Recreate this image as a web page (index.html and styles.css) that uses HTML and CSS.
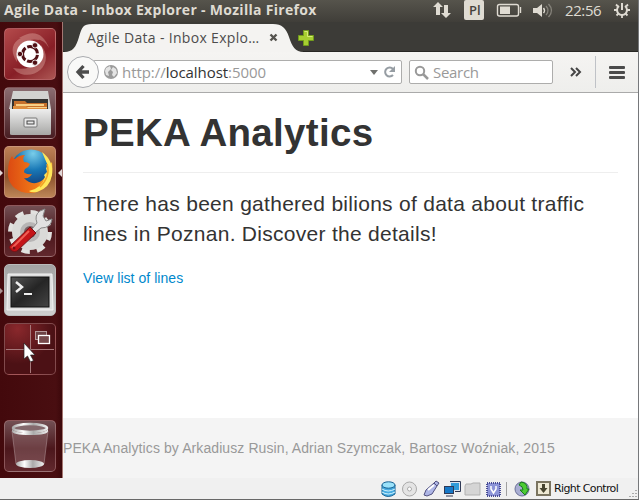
FILE: index.html
```html
<!DOCTYPE html>
<html lang="en">
<head>
<meta charset="utf-8">
<title>Agile Data - Inbox Explorer</title>
<link rel="stylesheet" href="styles.css">
</head>
<body>
<div class="desktop">
  <header class="panel">
    <span class="window-title">Agile Data - Inbox Explorer - Mozilla Firefox</span>
    <svg class="indicators" width="210" height="22" viewBox="0 0 210 22">
      <g fill="#dfdbd2">
        <path d="M9 2l5 5h-3v8H7V7H4zM17 18l-5-5h3V5h4v8h3z"/>
        <rect x="35" y="0" width="20" height="20" rx="2"/>
        <path d="M71 6.500h10v7.500H71zM104 8h4l5-4v13l-5-4h-4z"/>
      </g>
      <g fill="none" stroke="#dfdbd2" stroke-width="1.4">
        <rect x="68.500" y="4.500" width="21" height="11.500" rx="2"/><path d="M91.500 7v6"/>
        <path d="M114.500 8q2 2.500 0 5"/><path d="M117 6q4 4.500 0 9M119.500 4q6 6.500 0 13" stroke="#85827a"/>
      </g>
      <g fill="none" stroke="#dfdbd2" stroke-width="2">
        <path d="M190 6a5 5 0 1 0 6 0M193 3v7"/>
        <path d="M185 10h3M198 10h3M187.500 15.500l2-2M198.500 15.500l-2-2M193 15v3M187 4.500l2 2M199 4.500l-2 2" stroke-width="1.800"/>
      </g>
    </svg>
    <span class="layout-name">Pl</span>
    <span class="clock">22:56</span>
  </header>

  <div class="workspace">
    <nav class="launcher">
      <div class="tile dash"><svg viewBox="0 0 52 52">
        <path d="M13 34C-1 14 22 2 35 12q-8-2-15 3-7 5-7 19M37 17c13 16-2 34-20 29q-5-2-8-6 28 5 28-23M15 10Q36-3 45 20q-4-8-13-9-10-2-17-1" fill="#f5cfc5" opacity=".32"/>
        <circle cx="26" cy="26" r="13.500" fill="#fff"/>
        <circle cx="26" cy="26" r="7.500" fill="none" stroke="#501015" stroke-width="3" stroke-dasharray="13.800 1.908" stroke-dashoffset="-.9"/>
        <g fill="#501015" stroke="#fff" stroke-width=".8"><circle cx="16" cy="26" r="2.700"/><circle cx="31" cy="17.300" r="2.700"/><circle cx="31" cy="34.700" r="2.700"/></g>
      </svg></div>
      <div class="tile files"><svg viewBox="0 0 52 52">
        <defs><linearGradient id="metal" x2="0" y2="1"><stop stop-color="#eee"/><stop offset="1" stop-color="#a7a7a5"/></linearGradient></defs>
        <path d="M9 4h35l3 18H5z" fill="#d2d2d0"/><path d="M8 12h36v12H8z" fill="#343230"/>
        <path d="M10 14h11l2 2h20v7H10z" fill="#c66f2b"/><path d="M12 17h28v2H12zM10 20h33v1H10z" fill="#f8cf86"/>
        <path d="M9 19h13l2 2h19v4H9z" fill="#df8d3d"/><path d="M6 22h41v25q0 1-2 1H8q-2 0-2-1z" fill="url(#metal)"/>
        <rect x="20" y="31" width="13" height="9" rx="1" fill="#e9e9e9" stroke="#777"/><rect x="23" y="34" width="7" height="3" fill="none" stroke="#444"/>
      </svg></div>
      <div class="tile firefox"><i class="arrow running"></i><i class="arrow focused"></i><svg viewBox="0 0 52 52">
        <defs><radialGradient id="globe" cx=".55" cy=".1" r=".8"><stop stop-color="#79cdea"/><stop offset=".5" stop-color="#1978b6"/><stop offset="1" stop-color="#123c7a"/></radialGradient><linearGradient id="fox" x1="0" x2="1"><stop stop-color="#dc4a12"/><stop offset=".65" stop-color="#f17c18"/><stop offset="1" stop-color="#ffc83b"/></linearGradient></defs>
        <circle cx="27" cy="24" r="20.500" fill="url(#globe)"/>
        <path d="M8 10q1 3 3 3 4-4 10-4-3 3-1 7 4 0 6 2-1 3-5 5-2 3 0 4 3 2 7 1-3 5-8 4 5 6 12 5 11-2 12-16l4-5q2 15-6 24-8 8-18 7C11 46 3 37 4 25q0-10 4-15" fill="url(#fox)"/>
        <path d="M38 6q12 9 10 23-2 13-15 17-6 1-8-1 13-3 16-14l-1-2 3-3-1-4 2-2z" fill="#ffe75a"/><path d="M43 18q4 12-7 23" fill="none" stroke="#f0a428" stroke-width="1.500"/>
      </svg></div>
      <div class="tile settings"><svg viewBox="0 0 52 52">
        <circle cx="26" cy="27" r="19" fill="none" stroke="#e1e1df" stroke-width="6" stroke-dasharray="8 6.920"/>
        <circle cx="26" cy="27" r="13.500" fill="none" stroke="#dadad8" stroke-width="9"/><circle cx="26" cy="27" r="10" fill="#b7b5b5"/><circle cx="26" cy="27" r="6" fill="#785f63"/>
        <path d="M28 24l5-6q-3-8 3-12l5-2-2 7 3 5 6-2q-1 9-11 9l-6 5z" fill="#e1e1e1" stroke="#888"/>
        <path d="M26 22l6 6-19 18q-5 2-8-4z" fill="#c41418" stroke="#771116"/><path d="M25 26L8 43" stroke="#ef5d55" stroke-width="2"/><circle cx="10" cy="43" r="1.500" fill="#760e13"/>
      </svg></div>
      <div class="tile terminal"><i class="arrow hollow"></i><svg viewBox="0 0 52 52">
        <defs><linearGradient id="screen" x2="1" y2="1"><stop stop-color="#555"/><stop offset=".5" stop-color="#252525"/><stop offset="1" stop-color="#454545"/></linearGradient></defs>
        <path d="M4 10h44l1 36H3z" fill="#ddd" stroke="#f4f4f4"/><rect x="7" y="13" width="38" height="30" fill="url(#screen)" stroke="#111"/>
        <path d="M12 18l6 5-6 5" fill="none" stroke="#eee" stroke-width="2.500"/><path d="M20 30h8" stroke="#eee" stroke-width="2"/>
      </svg></div>
      <div class="tile workspaces"><svg viewBox="0 0 52 52">
        <path d="M26.500 2v48M2 26.500h48" stroke="#a6787a"/><rect x="31.500" y="8.500" width="11" height="8" fill="#6e4345" stroke="#b59a9b"/><rect x="34.500" y="12.500" width="11" height="8" fill="#76494b" stroke="#fff" stroke-width="1.300"/>
        <path d="M20 20v16l3.500-3 3 6 3-1.500-3-5.500h4.500z" fill="#fff" stroke="#222" stroke-width=".7"/>
      </svg></div>
      <div class="tile trash"><svg viewBox="0 0 52 52">
        <defs><linearGradient id="rim"><stop stop-color="#aaa"/><stop offset=".3" stop-color="#fff"/><stop offset=".6" stop-color="#aaa"/><stop offset="1" stop-color="#eee"/></linearGradient></defs>
        <path d="M8 11h36l-4 33q-14 5-28 0z" fill="#b99b9f" fill-opacity=".3" stroke="#a98b8e" stroke-opacity=".6"/>
        <ellipse cx="26" cy="44" rx="14" ry="4" fill="url(#rim)"/><ellipse cx="26" cy="8" rx="17" ry="4" fill="#84696d" stroke="url(#rim)" stroke-width="2.500"/><path d="M8 8q0 5 18 5t18-5v3q0 4-18 4T8 11z" fill="url(#rim)"/>
      </svg></div>
    </nav>

    <main class="browser">
      <div class="tab-strip">
        <svg class="tab-shape" width="258" height="30" viewBox="0 0 258 30"><path d="M0 30c9 0 12-5 15-15S19 2 28 2h181c9 0 13 4 16 13s6 15 15 15z" fill="#f4f3f1"/><path d="M239.500 8.500h5v5h5v5h-5v5h-5v-5h-5v-5h5z" fill="#a7cf31" stroke="#729c1c"/><path d="M240.500 9.500h3v5h5" stroke="#d7ec79" fill="none"/></svg>
        <span class="tab-title">Agile Data - Inbox Explo…</span>
        <svg class="tab-close" width="9" height="9" viewBox="0 0 9 9"><path d="M1.500 1.500l6 6m0-6l-6 6" stroke="#55534f" stroke-width="2.400"/></svg>
      </div>
      <div class="toolbar">
        <div class="back"><svg width="16" height="16" viewBox="0 0 16 16"><path d="M8.500 2L3 8l5.500 6M3 8h11" fill="none" stroke="#4c4c4c" stroke-width="3.300"/></svg></div>
        <div class="address"><svg width="14" height="14" viewBox="0 0 14 14"><circle cx="7" cy="7" r="7" fill="#9b9b9b"/><path d="M2 3l4-2 1 3-3 3 1 4-3-1-1-4zM9 2l3 2 1 4-3 4-2-2 1-3-2-2z" fill="#e4e4e4"/></svg>
          <span class="url">http://<b>localhost</b>:5000</span><svg class="reload" width="30" height="14" viewBox="0 0 30 14"><path d="M3 5h8l-4 5z" fill="#6f706d"/><path d="M26 4a4.500 4.500 0 1 0 0 6" fill="none" stroke="#969da3" stroke-width="2"/><path d="M28 1v6h-6z" fill="#969da3"/></svg></div>
        <div class="search"><svg width="15" height="15" viewBox="0 0 15 15"><circle cx="6" cy="6" r="4.200" fill="none" stroke="#999" stroke-width="2"/><path d="M9 9l5 5" stroke="#999" stroke-width="2.500"/></svg><span>Search</span></div>
        <svg class="overflow" width="12" height="10" viewBox="0 0 12 10"><path d="M1 1l4 4-4 4m5-8l4 4-4 4" fill="none" stroke="#454545" stroke-width="2"/></svg>
        <div class="menu"><i></i><i></i><i></i></div>
      </div>
      <article class="page">
        <h1>PEKA Analytics</h1>
        <p class="lead">There has been gathered bilions of data about traffic<br>lines in Poznan. Discover the details!</p>
        <a class="list-link">View list of lines</a>
      </article>
      <footer class="credits"><span>PEKA Analytics by Arkadiusz Rusin, Adrian Szymczak, Bartosz Woźniak, 2015</span></footer>
    </main>
  </div>

  <div class="status">
    <svg width="175" height="20" viewBox="0 0 175 20">
      <g transform="translate(1 2)" stroke="#176294"><path d="M1 4v9q6 5 13 0V4" fill="#49ace1"/><path d="M1 8q6 4 13 0M1 11q6 4 13 0" fill="none" stroke="#d5f5ff"/><ellipse cx="7.500" cy="4" rx="6.500" ry="3.200" fill="#9be2fa"/></g>
      <circle cx="29.500" cy="10" r="7" fill="#e4e4e4" stroke="#aaa"/><circle cx="29.500" cy="10" r="2" fill="#fff" stroke="#aaa"/>
      <path d="M44 16l2-5 8-7 3 3-5 8-5 2zM54 4l2-2 3 2-2 3" fill="#aeb6e6" stroke="#505080"/><path d="M48 11l6-5" stroke="#fff" stroke-width="2"/>
      <g stroke="#303a56"><rect x="70.500" y="3.500" width="9" height="8" fill="#319bd9" stroke="#dce4ef"/><path d="M70 2.500h10.500v10H75" fill="none"/><rect x="64.500" y="7.500" width="9" height="7" fill="#1678c7"/><path d="M66 17h7"/></g>
      <path d="M85 7l1-2h5l2-1h7v12H85z" fill="#d5d5d5" stroke="#b1b1b1"/>
      <rect x="107" y="4" width="13" height="13" fill="#9297dc" stroke="#484d95" stroke-dasharray="1 1" stroke-width="2"/><rect x="108" y="5" width="11" height="11" fill="#8c94d8"/><path d="M111 7v3l2.500 4 2.500-4V7" stroke="#fff" stroke-width="1.500" fill="none"/>
      <path d="M126.500 3v14" stroke="#a0a0a0"/><circle cx="142" cy="10" r="7" fill="#a9aed3" stroke="#6c7197"/><path d="M141 3q7 1 6 7l2 0-4 6-5-5h3q0-4-4-5z" fill="#4ccb34" stroke="#16791a"/>
      <rect x="157" y="3" width="13" height="13" fill="#eee9d4" stroke="#7a7460" stroke-width="2"/><path d="M163.500 5v5" stroke="#46432e" stroke-width="3"/><path d="M159.500 9h8l-4 5z" fill="#46432e"/>
    </svg>
    <span class="host-key">Right Control</span>
    <svg class="grip" width="9" height="9"><path d="M8 1v1M8 4v1M8 7v1M5 4v1M5 7v1M2 7v1" stroke="#aaa" stroke-width="2"/></svg>
  </div>
</div>
</body>
</html>
```
FILE: styles.css
```css
* { box-sizing: border-box; }
body { margin: 0; overflow: hidden; }
svg { display: block; flex: none; }
span { white-space: nowrap; }
.desktop { position: relative; width: 639px; height: 500px; display: flex; flex-direction: column; background: #f0f0f0; border-right: 1px solid #76787b; border-bottom: 1px solid #686868; }
.panel { height: 22px; flex: none; display: flex; background: linear-gradient(#56544c, #403e39); position: relative; color: #dfdbd2; font-family: "Open Sans", sans-serif; }
.window-title { margin-left: 4px; font-size: 14px; font-weight: 700; line-height: 20px; letter-spacing: .3px; }
.indicators { position: absolute; left: 429px; top: 0; }
.layout-name { position: absolute; left: 469px; top: 1px; font: 600 13px/18px "Open Sans", sans-serif; color: #45433e; }
.clock { position: absolute; left: 565px; top: 0; font-size: 15px; line-height: 20px; letter-spacing: -.4px; }
.workspace { height: 456px; flex: none; display: flex; }
.launcher { width: 63px; padding: 6px 0 0 4px; display: flex; flex-direction: column; gap: 7px; background: linear-gradient(90deg, #43090c, #490e11 90%, #3c080b); border-right: 1px solid #a47772; }
.tile { width: 52px; height: 52px; flex: none; position: relative; border-radius: 5px; border: 1px solid rgba(230,180,180,.35); background: linear-gradient(#735054, #4c171c 55%, #61282d); }
.tile svg { width: 52px; height: 52px; margin: -1px; }
.dash { background: linear-gradient(145deg, #b44a4b, #871e26 60%, #ad5754); }
.files { background: linear-gradient(#8b6d71, #481d22); }
.firefox { background: linear-gradient(#bd8056, #8e542e 60%, #bd8557); }
.terminal { background: linear-gradient(#a3a3a3, #cecece); border-color: #bbb; }
.workspaces { background: radial-gradient(circle at 25% 10%, #8a282c, #4c1115 60%); }
.trash { margin-top: 38px; }
.arrow { position: absolute; top: 22px; border: 4px solid transparent; }
.running { left: -6px; border-left-color: #e3d9d9; border-right: 0; }
.focused { right: -7px; border-right-color: #e3d9d9; border-left: 0; }
.hollow { left: -6px; border-left-color: #a99292; border-right: 0; }
.browser { width: 575px; display: flex; flex-direction: column; background: #fff; }
.tab-strip { height: 30px; flex: none; position: relative; background: #3c3b37; border-bottom: 1px solid #282724; }
.tab-shape { position: absolute; left: 1px; top: 0; }
.tab-title { position: absolute; left: 24px; top: 6px; color: #4c4c4c; font: 14px/20px "Open Sans", sans-serif; letter-spacing: .32px; }
.tab-close { position: absolute; left: 206px; top: 11px; }
.toolbar { height: 41px; flex: none; display: flex; align-items: center; background: linear-gradient(#f5f4f2, #eeeeec); border-bottom: 1px solid #aaa; }
.back { width: 32px; height: 32px; margin-left: 4px; flex: none; display: flex; align-items: center; justify-content: center; border: 1px solid #a9abaf; border-radius: 50%; background: #f9f9f8; z-index: 1; }
.address { width: 309px; height: 24px; margin-left: -6px; padding: 0 4px 0 10px; display: flex; align-items: center; gap: 4px; background: #fff; border: 1px solid #adadac; border-radius: 2px; }
.url { font: 15px/20px "Open Sans", sans-serif; color: #999; letter-spacing: -.05px; }
.url b { font-weight: 400; color: #333; }
.reload { margin-left: auto; }
.search { width: 144px; height: 24px; margin-left: 7px; padding-left: 4px; display: flex; align-items: center; gap: 4px; border: 1px solid #adadac; border-radius: 2px; background: #fff; color: #999; font: 15px/20px "Open Sans", sans-serif; letter-spacing: -.3px; }
.overflow { margin-left: 17px; }
.menu { height: 32px; margin-left: 13px; padding-left: 13px; border-left: 1px solid #bfc2c7; display: flex; flex-direction: column; justify-content: center; gap: 2px; }
.menu i { width: 16px; height: 3px; border-radius: 1px; background: #4b4b4b; }
.page { height: 325px; flex: none; padding: 20px 20px 0; font-family: "Liberation Sans", sans-serif; color: #333; }
h1 { height: 60px; margin: 0; border-bottom: 1px solid #eee; font-size: 38.500px; line-height: 40px; letter-spacing: .32px; }
.lead { margin: 16px 0 19px; font-size: 21px; line-height: 30px; letter-spacing: .28px; white-space: nowrap; }
.list-link { display: block; font-size: 14px; line-height: 20px; letter-spacing: .05px; color: #08c; }
.credits { flex: 1; padding-top: 20px; background: #f4f4f4; color: #999; font: 14px/20px "Liberation Sans", sans-serif; letter-spacing: .09px; }
.status { flex: 1; display: flex; align-items: center; padding-left: 380px; position: relative; background: #f0f0f0; }
.host-key { font: 11px/16px "DejaVu Sans", sans-serif; color: #111; margin-left: -1px; letter-spacing: -.62px; }
.grip { position: absolute; right: 1px; bottom: 1px; }
```
